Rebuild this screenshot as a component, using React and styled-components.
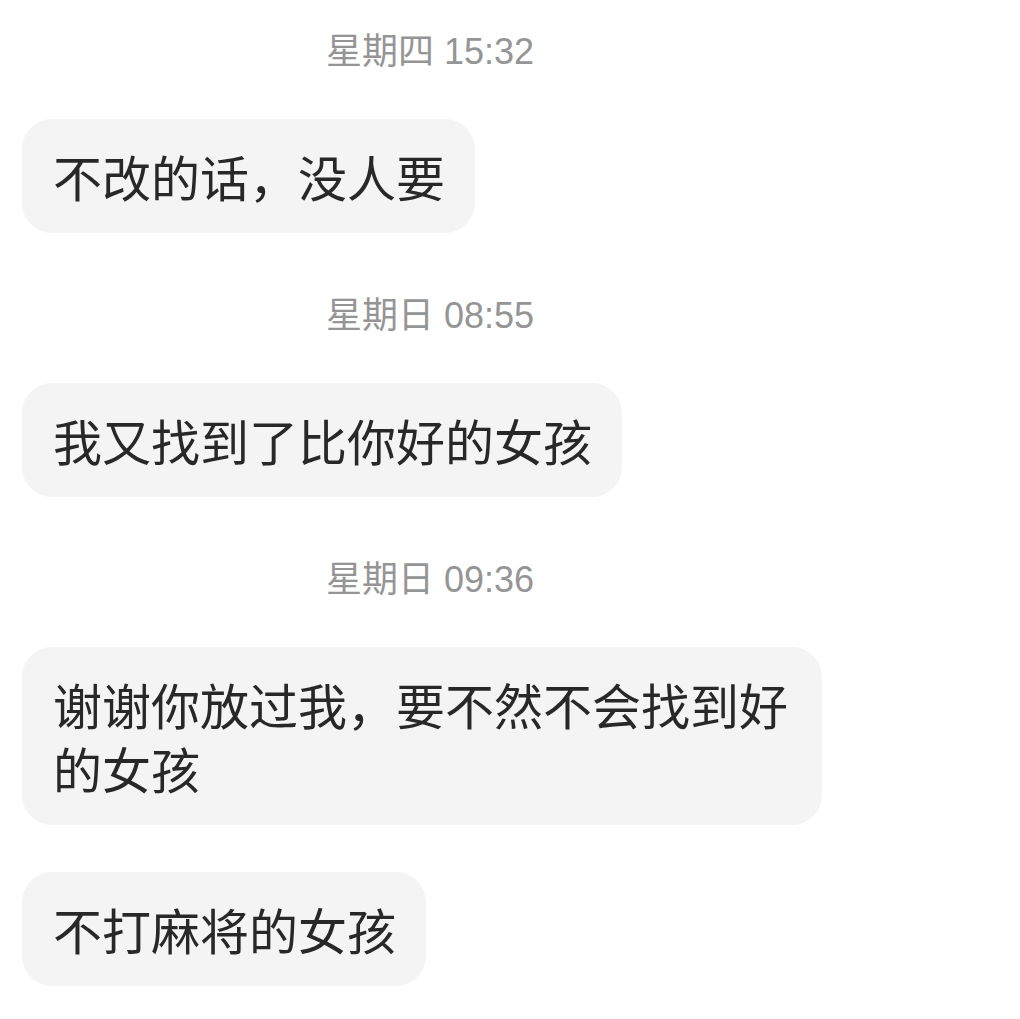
import React from 'react';
import styled, { createGlobalStyle } from 'styled-components';

const GlobalStyle = createGlobalStyle`
  html, body {
    margin: 0;
    padding: 0;
    background: #ffffff;
  }
`;

const conversation = [
    {
        time: '星期四 15:32',
        messages: ['不改的话，没人要'],
    },
    {
        time: '星期日 08:55',
        messages: ['我又找到了比你好的女孩'],
    },
    {
        time: '星期日 09:36',
        messages: ['谢谢你放过我，要不然不会找到好的女孩', '不打麻将的女孩'],
    },
];

const Page = styled.main`
    display: flex;
    flex-direction: column;
    gap: 63px;
    width: 1020px;
    min-height: 1019px;
    box-sizing: border-box;
    padding: 32px 0 0 22px;
    background: #ffffff;
`;

const Section = styled.section`
    display: flex;
    flex-direction: column;
    align-items: flex-start;
    gap: 47px;
`;

const Timestamp = styled.div`
    align-self: stretch;
    padding-right: 182px;
    text-align: center;
    font-family: "Liberation Sans", "Noto Sans CJK SC", sans-serif;
    font-size: 36px;
    line-height: 40px;
    color: #959595;
`;

const Bubble = styled.div`
    max-width: 800px;
    box-sizing: border-box;
    padding: 25px 30px 25px 31px;
    border-radius: 30px;
    background: #f4f4f4;
    font-family: "Noto Sans CJK SC", sans-serif;
    font-size: 49px;
    line-height: 64px;
    color: #282828;
`;

const App = () => {
    return (
        <>
            <GlobalStyle />
            <Page>
                {
                    conversation.map((group) => (
                        <Section key={ group.time }>
                            <Timestamp>{ group.time }</Timestamp>
                            {
                                group.messages.map((text) => (
                                    <Bubble key={ text }>{ text }</Bubble>
                                ))
                            }
                        </Section>
                    ))
                }
            </Page>
        </>
    );
}

export default App;
